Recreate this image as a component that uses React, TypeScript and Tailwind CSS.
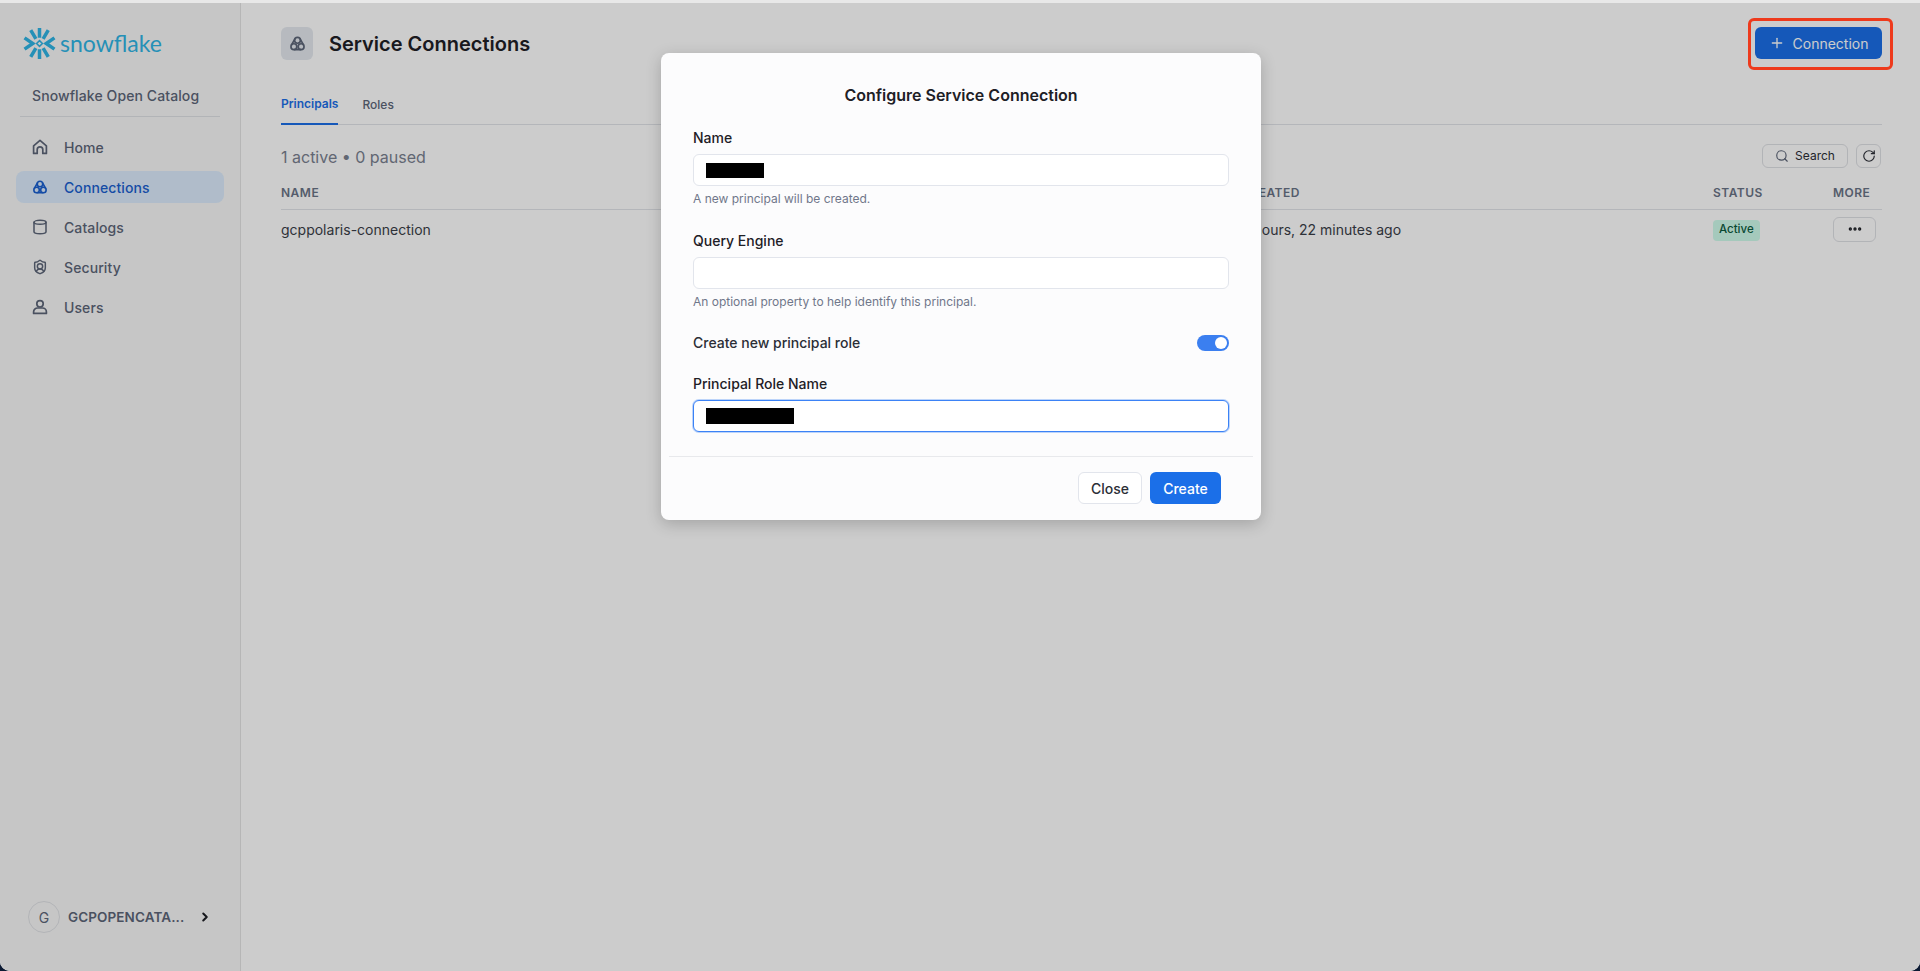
import { ChevronRight, Cylinder, Ellipsis, Plus, RotateCw, Search, ShieldUser } from "lucide-react";

function ConnectionIcon({ className }: { className?: string }) {
  return (
    <svg viewBox="0 0 16 16" fill="none" stroke="currentColor" strokeWidth="1.6" className={className}>
      <path d="M5.6 3.6 L2.2 9.6 M10.4 3.6 L13.8 9.6 M4.6 13.75 H11.4" />
      <circle cx="8" cy="5" r="2.75" />
      <circle cx="4.6" cy="11" r="2.75" />
      <circle cx="11.4" cy="11" r="2.75" />
    </svg>
  );
}

function HomeIcon({ className }: { className?: string }) {
  return (
    <svg viewBox="0 0 16 16" fill="none" stroke="currentColor" strokeWidth="1.7" strokeLinejoin="round" className={className}>
      <path d="M1.6 6.8 L8 1.4 L14.4 6.8 V14.4 H10.8 V10.6 a2.8 2.8 0 0 0 -5.6 0 V14.4 H1.6 Z" />
    </svg>
  );
}

function UserIcon({ className }: { className?: string }) {
  return (
    <svg viewBox="0 0 16 16" fill="none" stroke="currentColor" strokeWidth="1.7" className={className}>
      <circle cx="8" cy="4.8" r="3.2" />
      <path d="M1.6 13 a4 4 0 0 1 4 -4 h4.8 a4 4 0 0 1 4 4 v1.4 H1.6 Z" strokeLinejoin="round" />
    </svg>
  );
}

function CatalogIcon({ className }: { className?: string }) {
  return <Cylinder className={className} strokeWidth={2.3} />;
}

function SecurityIcon({ className }: { className?: string }) {
  return <ShieldUser className={className} strokeWidth={2.2} />;
}

function SnowflakeMark() {
  return (
    <svg viewBox="0 0 32 32" className="w-[33px] h-[33px] shrink-0" fill="none" stroke="#2fb5e5" strokeWidth="3.4">
      <path d="M16 1 V10.5 M16 21.5 V31" />
      <path d="M7.5 3 L12.5 11.5 M24.5 3 L19.5 11.5 M7.5 29 L12.5 20.5 M24.5 29 L19.5 20.5" />
      <path d="M1.5 10.5 L9.5 16 L1.5 21.5 M30.5 10.5 L22.5 16 L30.5 21.5" />
      <path d="M16 13.2 L18.8 16 L16 18.8 L13.2 16 Z" strokeWidth="1.5" />
    </svg>
  );
}

const navItems = [
  { label: "Home", Icon: HomeIcon },
  { label: "Connections", Icon: ConnectionIcon, active: true },
  { label: "Catalogs", Icon: CatalogIcon },
  { label: "Security", Icon: SecurityIcon },
  { label: "Users", Icon: UserIcon },
];

function Sidebar() {
  return (
    <aside className="w-[241px] shrink-0 flex flex-col bg-[#f8f8f8] border-r border-[#e4e4e4]">
      <div className="flex items-center h-[33px] mt-[24px] ml-[23px]">
        <SnowflakeMark />
        <span className="ml-[4px] text-[23px] leading-none font-normal text-[#2fb5e5] font-['Lato',sans-serif]">snowflake</span>
      </div>
      <div className="mt-[26px] mx-[20px] pl-[12px] pb-[10px] border-b border-[#dfe1e5] text-[14px] leading-5 font-medium tracking-[0.1px] text-[#5d6679]">
        Snowflake Open Catalog
      </div>
      <nav className="mt-[14px] mx-[16px] flex flex-col gap-2">
        {navItems.map(({ label, Icon, active }) => (
          <div
            key={label}
            className={
              active
                ? "flex items-center h-8 pl-[16px] rounded-lg bg-[#dcecfd] text-[#1a5fd0] font-medium text-[14px] tracking-[0.1px]"
                : "flex items-center h-8 pl-[16px] rounded-lg text-[#5d6679] font-medium text-[14px] tracking-[0.1px]"
            }
          >
            <Icon className="w-4 h-4 shrink-0" />
            <span className="ml-[16px]">{label}</span>
          </div>
        ))}
      </nav>
      <div className="mt-auto mb-[38px] ml-[28px] flex items-center">
        <div className="w-8 h-8 rounded-full border border-[#e0e2e6] flex items-center justify-center text-[14px] text-[#5d6679]">G</div>
        <span className="ml-[8px] w-[130px] whitespace-nowrap text-[13.5px] tracking-[0.1px] font-semibold text-[#5d6679]">GCPOPENCATA...</span>
        <ChevronRight className="w-[14px] h-[14px] text-[#1e2026]" strokeWidth={3.5} />
      </div>
    </aside>
  );
}

function MainPanel() {
  return (
    <main className="flex-1 bg-white pt-[24px] pl-[40px] pr-[38px] min-w-0">
      <div className="flex items-center justify-between h-[32px]">
        <div className="flex items-center">
          <div className="w-8 h-[33px] rounded-md bg-[#e5e9ef] flex items-center justify-center text-[#5d6679]">
            <ConnectionIcon className="w-[17px] h-[17px]" />
          </div>
          <h1 className="ml-[16px] pt-[2px] text-[20px] font-semibold text-[#1e2026]">Service Connections</h1>
        </div>
        <div className="relative">
          <button className="flex items-center justify-center w-[127px] h-8 rounded-md bg-[#1b6fe8] text-white text-[14px]">
            <Plus className="w-[16px] h-[16px]" />
            <span className="ml-[8px]">Connection</span>
          </button>
          <div className="absolute -left-[7px] -top-[9px] -right-[11px] -bottom-[11px] z-20 rounded-md border-[3px] border-[#ee3a1c]" />
        </div>
      </div>

      <div className="mt-[30px] h-[36px] flex items-start border-b border-[#e2e4e9] text-[12px] font-medium">
        <div className="h-[36px] pb-[4px] flex items-center border-b-2 border-[#1b6fe8] text-[#1b6fe8] font-semibold">Principals</div>
        <div className="h-[36px] pb-[4px] flex items-center ml-[24px] text-[#5d6679]">Roles</div>
      </div>

      <div className="mt-[19px] h-[24px] flex items-center justify-between">
        <span className="pt-[2px] text-[16px] text-[#7a8190]">1 active • 0 paused</span>
        <div className="mr-[1px] flex items-center gap-[8px]">
          <button className="flex items-center justify-center w-[86px] h-6 rounded-md border border-[#dfe1e5] text-[12px] text-[#2b2e36]">
            <Search className="w-[14px] h-[14px] text-[#5d6679]" />
            <span className="ml-[6px]">Search</span>
          </button>
          <button className="flex items-center justify-center w-[25px] h-6 rounded-md border border-[#dfe1e5] text-[#2b2e36]">
            <RotateCw className="w-[14px] h-[14px]" />
          </button>
        </div>
      </div>

      <div className="mt-[15px] h-[27px] flex items-start border-b border-[#e2e4e9] text-[12px] font-semibold tracking-[0.5px] text-[#6a7386] leading-[20px]">
        <div className="flex-1">NAME</div>
        <div className="w-[472px]">CREATED</div>
        <div className="w-[120px]">STATUS</div>
        <div className="w-[49px]">MORE</div>
      </div>

      <div className="h-[40px] pb-[2px] flex items-center text-[14px] text-[#3a3e48]">
        <div className="flex-1">gcppolaris-connection</div>
        <div className="w-[472px]">2 hours, 22 minutes ago</div>
        <div className="w-[120px]">
          <span className="inline-flex items-center h-[21px] px-[6px] rounded bg-[#cffcec] text-[11.5px] font-medium text-[#0b5a3e]">Active</span>
        </div>
        <div className="w-[49px]">
          <button className="flex items-center justify-center w-[43px] h-[25px] rounded-md border border-[#dfe1e5] text-[#1e2026]">
            <Ellipsis className="w-4 h-4" strokeWidth={3} />
          </button>
        </div>
      </div>
    </main>
  );
}

function Field({ label, help, focused, redact }: { label: string; help?: string; focused?: boolean; redact?: string }) {
  return (
    <div>
      <div className="h-5 text-[14px] leading-[22px] font-[450] text-[#1e2026]">{label}</div>
      <div
        className={
          focused
            ? "mt-[7px] h-8 px-[12px] flex items-center rounded-md bg-white border border-[#3b82f6] ring-1 ring-[#bcd4fa]"
            : "mt-[7px] h-8 px-[12px] flex items-center rounded-md bg-white border border-[#e2e5ec]"
        }
      >
        {redact && <span className={redact} />}
      </div>
      {help && <div className="mt-[5px] h-4 text-[12px] leading-4 text-[#70778a]">{help}</div>}
    </div>
  );
}

function ConfigureDialog() {
  return (
    <div className="w-[600px] h-[467px] rounded-lg bg-[#fcfcfd] shadow-[0_4px_16px_rgba(0,0,0,0.2)] pt-[30px] px-[32px]">
      <h2 className="h-6 text-center text-[16px] leading-6 font-semibold text-[#1e2026]">Configure Service Connection</h2>
      <div className="mt-[20px] flex flex-col gap-[23px]">
        <Field label="Name" help="A new principal will be created." redact="block w-[58px] h-[15px] bg-black" />
        <Field label="Query Engine" help="An optional property to help identify this principal." />
      </div>
      <div className="mt-[22px] h-5 flex items-center justify-between text-[14px] font-[450] text-[#2b2e36]">
        <span>Create new principal role</span>
        <div className="mt-[2px] w-8 h-4 rounded-full bg-[#3b7ff0] flex items-center justify-end pr-[2px]">
          <span className="w-3 h-3 rounded-full bg-white" />
        </div>
      </div>
      <div className="mt-[21px]">
        <Field label="Principal Role Name" focused redact="block w-[88px] h-[16px] bg-black" />
      </div>
      <div className="mt-[24px] -mx-[24px] border-t border-[#e8e9ec]" />
      <div className="mt-[15px] pr-[8px] flex justify-end gap-[8px] text-[14px] font-[450]">
        <button className="w-[64px] h-8 rounded-md bg-white border border-[#e2e5ec] text-[#2b2e36]">Close</button>
        <button className="w-[71px] h-8 rounded-md bg-[#1b6fe8] text-white">Create</button>
      </div>
    </div>
  );
}

export default function App() {
  return (
    <div className="h-[971px] w-full bg-[#0c1a33] font-['Inter',sans-serif]">
      <div className="h-full rounded-b-[10px] overflow-hidden flex flex-col bg-white">
        <div className="h-[3px] shrink-0 bg-[#e8e8e8]" />
        <div className="relative flex-1 flex min-h-0">
          <Sidebar />
          <MainPanel />
          <div className="absolute inset-0 z-10 bg-black/20 flex justify-center pt-[50px] pl-[2px]">
            <ConfigureDialog />
          </div>
        </div>
      </div>
    </div>
  );
}
